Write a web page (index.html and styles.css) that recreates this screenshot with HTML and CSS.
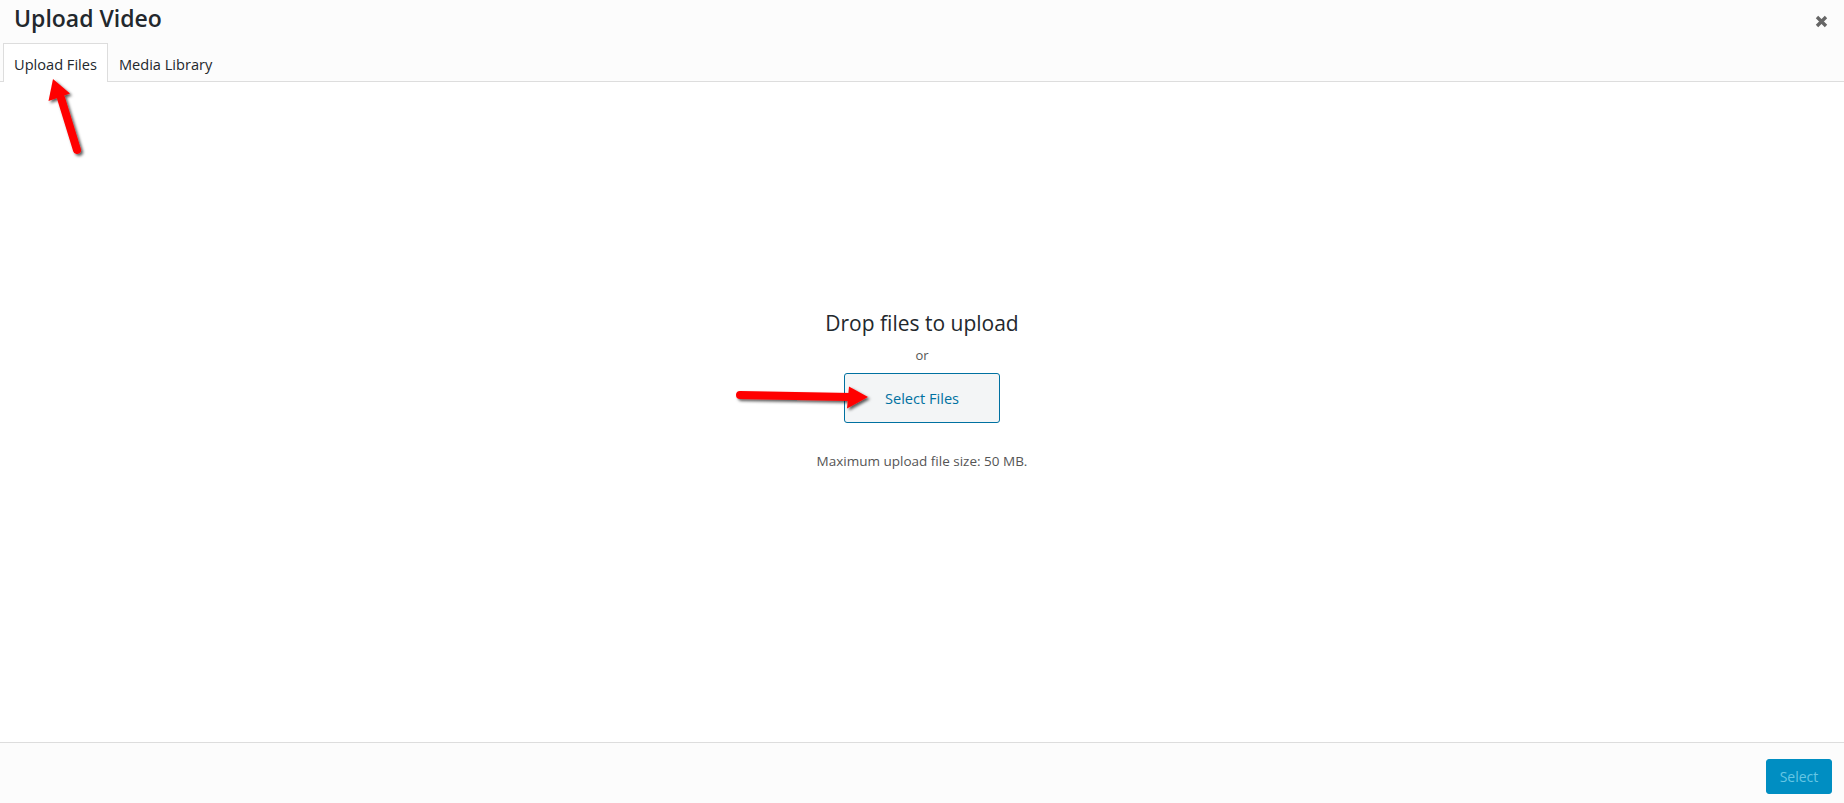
FILE: index.html
```html
<!DOCTYPE html>
<html lang="en">

<head>
    <meta charset="UTF-8">
    <meta name="viewport" content="width=device-width, initial-scale=1.0">
    <title>Upload Video</title>
    <link rel="stylesheet" href="styles.css">
</head>

<body>
    <div class="modal">
        <div class="modal-head">
            <div class="title-row">
                <h1 class="title">Upload Video</h1>
                <button class="close" type="button">
                    <svg width="13" height="13" viewBox="0 0 13 13">
                        <path d="M2 2 L11 11 M11 2 L2 11" stroke="#666" stroke-width="3.4" />
                    </svg>
                </button>
            </div>
            <div class="tabs">
                <a class="tab active">Upload Files</a>
                <a class="tab">Media Library</a>
            </div>
        </div>

        <div class="modal-body">
            <div class="uploader">
                <p class="drop-title">Drop files to upload</p>
                <p class="or">or</p>
                <button class="browse" type="button">Select Files</button>
                <p class="max-size">Maximum upload file size: 50 MB.</p>
            </div>
        </div>

        <div class="modal-foot">
            <button class="select-btn" type="button" disabled>Select</button>
        </div>
    </div>

    <!-- red annotation arrows -->
    <svg class="marks" viewBox="0 0 1844 803" width="1844" height="803">
        <defs>
            <filter id="shade" x="-20%" y="-20%" width="160%" height="160%">
                <feDropShadow dx="2" dy="2" stdDeviation="1.4" flood-color="#000" flood-opacity="0.65" />
            </filter>
        </defs>
        <g filter="url(#shade)" fill="#ff0000">
            <path d="M77 150 L61 98" stroke="#ff0000" stroke-width="8" stroke-linecap="round" />
            <polygon points="53,79 48.5,101 70,93.5" />
            <path d="M740 395 L851 397" stroke="#ff0000" stroke-width="8" stroke-linecap="round" />
            <polygon points="868,397 849,386.5 847,408.5" />
        </g>
    </svg>
</body>

</html>
```

FILE: styles.css
```css
* {
    margin: 0;
    padding: 0;
    box-sizing: border-box;
}

body {
    font-family: "Open Sans", "Noto Sans", sans-serif;
    color: #23282d;
    background: #fff;
    height: 100vh;
    overflow: hidden;
}

.modal {
    height: 100%;
    display: flex;
    flex-direction: column;
}

/* 顶部 */
.modal-head {
    background: #fcfcfc;
    border-bottom: 1px solid #ddd;
}

.title-row {
    height: 43px;
    display: flex;
    align-items: center;
    justify-content: space-between;
    padding: 0 16px 8px 14px;
}

.title {
    font-size: 23px;
    font-weight: 600;
    line-height: 30px;
}

.close {
    border: none;
    background: none;
    width: 13px;
    height: 13px;
    display: flex;
    margin-top: 8px;
}

.tabs {
    display: flex;
    padding-left: 3px;
    height: 38px;
}

.tab {
    font-size: 14.6px;
    line-height: 40px;
    padding: 0 10px;
    color: #23282d;
    border: 1px solid transparent;
    border-bottom: none;
    margin-bottom: -1px;
}

.tab.active {
    background: #fff;
    border-color: #ddd;
    height: 39px;
}

/* 中间上传区 */
.modal-body {
    flex: 1;
    display: flex;
    justify-content: center;
}

.uploader {
    padding-top: 227px;
    text-align: center;
    display: flex;
    flex-direction: column;
    align-items: center;
}

.drop-title {
    font-size: 21px;
    line-height: 28px;
    color: #23282d;
}

.or {
    font-size: 13px;
    line-height: 20px;
    margin-top: 8px;
    color: #555;
}

.browse {
    margin-top: 8px;
    width: 156px;
    height: 50px;
    border: 1px solid #0071a1;
    border-radius: 3px;
    background: #f3f5f6;
    color: #0071a1;
    font: 14.6px "Open Sans", "Noto Sans", sans-serif;
}

.max-size {
    margin-top: 28px;
    font-size: 13.5px;
    line-height: 20px;
    color: #555;
}

/* 底部 */
.modal-foot {
    height: 61px;
    border-top: 1px solid #ddd;
    background: #fcfcfc;
    display: flex;
    justify-content: flex-end;
    align-items: flex-start;
    padding: 16px 12px 0 0;
}

.select-btn {
    width: 66px;
    height: 35px;
    border: 1px solid #008ec2;
    border-radius: 3px;
    background: #008ec2;
    color: #66c6e4;
    font: 14px "Open Sans", "Noto Sans", sans-serif;
}

.marks {
    position: absolute;
    left: 0;
    top: 0;
    pointer-events: none;
}
```
